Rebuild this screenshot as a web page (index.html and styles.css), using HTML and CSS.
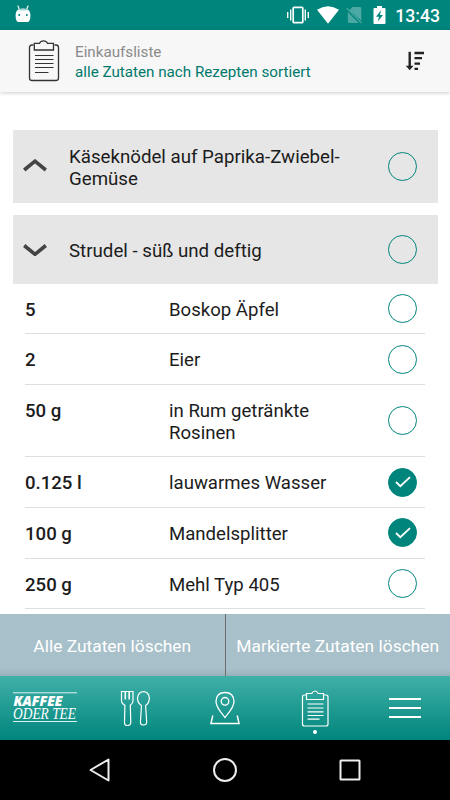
FILE: index.html
```html
<!DOCTYPE html>
<html lang="de">

<head>
    <meta charset="UTF-8">
    <meta name="viewport" content="width=device-width, initial-scale=1.0">
    <title>Einkaufsliste</title>
    <link rel="stylesheet" href="styles.css">
</head>

<body>
    <div class="status-bar">
        <svg class="droid" width="16" height="18" viewBox="0 0 16 18">
            <path d="M3 1l1.3 3.4M13 1l-1.3 3.4" stroke="#fff" stroke-width="1.2" stroke-linecap="round" />
            <path d="M3.4 4.4Q8 2.5 12.6 4.4C15 5.6 15.4 8 15.4 11c0 3-.7 5-2.2 6H2.8C1.3 16 .6 14 .6 11c0-3 .4-5.4 2.8-6.6z" fill="#fff" />
            <path d="M3.5 4.8h9" stroke="#80c3bf" stroke-width="1" />
            <circle cx="4.2" cy="10" r="1" fill="#00857c" />
            <circle cx="11.8" cy="10" r="1" fill="#00857c" />
        </svg>
        <div class="status-icons">
            <svg width="24" height="20" viewBox="0 0 24 20">
                <rect x="7.2" y="2.3" width="9.6" height="15.4" rx="1" fill="none" stroke="#fff" stroke-width="1.7" />
                <path d="M4.7 4.5v11M1.7 7v6M19.3 4.5v11M22.3 7v6" stroke="#fff" stroke-width="1.4" />
            </svg>
            <svg class="wifi" width="22" height="18" viewBox="0 0 22 18">
                <path d="M0 3.8Q11-3.3 22 3.8L11 17.8z" fill="#fff" />
            </svg>
            <svg class="no-sim" width="17" height="18" viewBox="0 0 17 18">
                <path d="M3.5 4.2L6.5 1H14q1.3 0 1.3 1.3v12.5zM1.8 6l11 11H3.2q-1.4 0-1.4-1.4z" fill="#4da9a3" />
                <path d="M.7 2.2l15 15" stroke="#4da9a3" stroke-width="1.2" />
            </svg>
            <svg class="battery" width="13" height="18" viewBox="0 0 13 18">
                <path d="M4 0h5v2h2.5q1 0 1 1v14q0 1-1 1h-10q-1 0-1-1V3q0-1 1-1H4z" fill="#fff" />
                <path d="M8 4.2L3 10.8h3L4.9 15.5 10 9H6.9z" fill="#00857c" />
            </svg>
            <span class="clock">13:43</span>
        </div>
    </div>

    <div class="header">
        <svg class="clipboard" width="32" height="42" viewBox="0 0 32 42" fill="none" stroke="#333">
            <path d="M5.5 5H4Q1.5 5 1.5 7.5V38Q1.5 40.5 4 40.5H28Q30.5 40.5 30.5 38V7.5Q30.5 5 28 5H26.5" stroke-width="1.3" />
            <path d="M6.3 3.3h5.2Q12.5.8 15.5.8t4 2.5h6V10H6.3z" stroke-width="1.3" />
            <path d="M7 15.500h18.500M7 19.500h18.500M7 23.500h18.500M7 27.500h18.500M7 32.500h13.500" />
        </svg>
        <div class="header-text">
            <h1>Einkaufsliste</h1>
            <p>alle Zutaten nach Rezepten sortiert</p>
        </div>
        <svg class="sort" width="20" height="20" viewBox="0 0 20 20" fill="none" stroke="#222">
            <path d="M4.7.8v16" stroke-width="2.4" />
            <path d="M.8 14.8l3.9 4.4 3.9-4.400z" fill="#222" stroke="none" />
            <path d="M9.5 2h9.500M9.500 7.200h7.500M9.500 12.700h5.500M9.500 17.800h3.500" stroke-width="2.3" />
        </svg>
    </div>

    <div class="content">
        <div class="recipe recipe-tall">
            <svg class="chevron" width="24" height="14" viewBox="0 0 24 14"><path d="M1.2 11L12 2.200 22.800 11" /></svg>
            <h2>Käseknödel auf Paprika-Zwiebel-Gemüse</h2>
            <span class="check"></span>
        </div>
        <div class="recipe">
            <svg class="chevron" width="24" height="14" viewBox="0 0 24 14"><path d="M1.2 3.5L12 12.300 22.800 3.500" /></svg>
            <h2>Strudel - süß und deftig</h2>
            <span class="check"></span>
        </div>
        <ul class="ingredients">
            <li><b>5</b><span class="name">Boskop Äpfel</span><span class="check"></span></li>
            <li><b>2</b><span class="name">Eier</span><span class="check"></span></li>
            <li><b>50 g</b><span class="name">in Rum getränkte Rosinen</span><span class="check"></span></li>
            <li>
                <b>0.125 l</b><span class="name">lauwarmes Wasser</span>
                <span class="check checked"><svg width="16" height="12" viewBox="0 0 16 12"><path d="M1 6l4.3 4.2L15 1.2" /></svg></span>
            </li>
            <li>
                <b>100 g</b><span class="name">Mandelsplitter</span>
                <span class="check checked"><svg width="16" height="12" viewBox="0 0 16 12"><path d="M1 6l4.3 4.2L15 1.2" /></svg></span>
            </li>
            <li><b>250 g</b><span class="name">Mehl Typ 405</span><span class="check"></span></li>
        </ul>
    </div>

    <div class="actions">
        <button>Alle Zutaten löschen</button>
        <button>Markierte Zutaten löschen</button>
    </div>

    <div class="tab-bar">
        <a class="tab">
            <svg class="logo" width="64" height="32" viewBox="0 0 64 32">
                <path d="M0 .8h64M0 29.5h64" stroke="#fff" stroke-opacity=".85" />
                <text class="logo-bold" x="0.5" y="14" textLength="49" lengthAdjust="spacingAndGlyphs">KAFFEE</text>
                <text class="logo-thin" x="0" y="27" textLength="63" lengthAdjust="spacingAndGlyphs">ODER TEE</text>
            </svg>
        </a>
        <a class="tab">
            <svg width="30" height="36" viewBox="0 0 30 36" fill="none" stroke="#fff" stroke-width="1.2">
                <path d="M1.5 1.5H13V11Q13 13.3 10.3 15.3L10.8 33Q10.5 35.5 7.5 35.5T4.5 33L4.9 15.3Q1.5 13.3 1.5 11z" />
                <path d="M5.3 1.5V9.5M9.2 1.5V9.5" stroke-width="1.6" />
                <path d="M21.5 15.5Q17.5 13 17.5 8Q18.5 1.6 23.5 1.6T29.4 8Q29.4 13 25.6 15.5L26.7 32.5Q26.5 35 23.5 35T20.4 32.5z" />
            </svg>
        </a>
        <a class="tab">
            <svg width="30" height="34" viewBox="0 0 30 34" fill="none" stroke="#fff" stroke-width="1.3">
                <path d="M15 26.5C11.5 22 6 16.5 6 10.5Q6.3 1.5 15 1.5T24 10.5C24 16.5 18.5 22 15 26.5z" />
                <circle cx="15" cy="10.3" r="3.8" />
                <path d="M2.8 24.5L.9 32.6H29.1L27.2 24.5" stroke-width="1.5" />
            </svg>
        </a>
        <a class="tab active">
            <svg width="28" height="37" viewBox="0 0 28 37" fill="none" stroke="#fff" stroke-width="1.2">
                <path d="M5.5 5H3.5Q1.5 5 1.5 7V34Q1.5 36 3.5 36H25Q27 36 27 34V7Q27 5 25 5H22.5" />
                <path d="M5.5 3.5h5.3Q12 1 14 1t3.2 2.5h5.3V9.5H5.5z" />
                <path d="M6.5 14h16M6.5 18h16M6.5 21.8h16M6.5 25.5h16M6.5 29.2h12" />
            </svg>
        </a>
        <a class="tab">
            <svg width="32" height="22" viewBox="0 0 32 22" stroke="#fff" stroke-width="2"><path d="M0 2h32M0 11h32M0 20h32" /></svg>
        </a>
    </div>

    <div class="system-nav">
        <svg width="24" height="26" viewBox="0 0 24 26"><path d="M20.5 2.5v21L2.5 13z" /></svg>
        <svg width="26" height="26" viewBox="0 0 26 26"><circle cx="13" cy="13" r="11" /></svg>
        <svg width="24" height="24" viewBox="0 0 24 24"><rect x="2.5" y="2.5" width="19" height="19" rx=".5" /></svg>
    </div>
</body>

</html>
```

FILE: styles.css
```css
* {
    padding: 0;
    margin: 0;
    box-sizing: border-box;
}

body {
    display: flex;
    flex-direction: column;
    height: 800px;
    overflow: hidden;
    font-family: Roboto, sans-serif;
    color: #1c1c1c;
    background: #fff;
}

svg {
    display: block;
    flex: none;
}

.status-bar {
    display: flex;
    justify-content: space-between;
    flex: none;
    height: 30px;
    padding: 5px 10px 0 15px;
    background: #00857c;
}

.status-icons {
    display: flex;
    align-items: flex-start;
}

.wifi {
    margin: 1px 0 0 7px;
}

.no-sim {
    margin: 1px 0 0 7px;
}

.battery {
    margin: 1px 0 0 10px;
}

.clock {
    margin-left: 9px;
    font-size: 17.6px;
    line-height: 22px;
    font-weight: 500;
    color: #fff;
}

.header {
    display: flex;
    flex: none;
    height: 62px;
    padding: 0 25px 0 28px;
    background: #f7f7f7;
    box-shadow: 0 1px 4px rgba(0, 0, 0, 0.2);
}

.clipboard {
    margin-top: 10px;
}

.header-text {
    flex: 1;
    padding: 12px 0 0 15px;
}

.header-text h1,
.header-text p {
    font-size: 15.2px;
    line-height: 20px;
    font-weight: 400;
    color: #8a8a8a;
}

.header-text p {
    line-height: 21px;
    color: #00796b;
}

.sort {
    margin-top: 21px;
}

.content {
    flex: 1;
    min-height: 0;
    overflow: hidden;
    padding: 38px 12.5px 0;
}

.recipe {
    display: flex;
    align-items: center;
    height: 68.5px;
    padding: 0 20.5px 0 10px;
    background: #e6e6e6;
}

.recipe-tall {
    height: 72.5px;
    margin-bottom: 12.5px;
}

.chevron {
    fill: none;
    stroke: #444;
    stroke-width: 3.6;
}

.recipe h2 {
    width: 290px;
    margin: 3px auto 0 22.5px;
    font-size: 18.7px;
    line-height: 22px;
    font-weight: 400;
}

.check {
    display: flex;
    align-items: center;
    justify-content: center;
    flex: none;
    width: 29px;
    height: 29px;
    border: 1px solid #00857c;
    border-radius: 50%;
}

.checked {
    background: #00857c;
}

.checked path {
    fill: none;
    stroke: #fff;
    stroke-width: 1.8;
}

.ingredients {
    margin: 0 12.5px;
    list-style: none;
}

.ingredients li {
    display: flex;
    align-items: center;
    min-height: 50.3px;
    padding: 16px 8px 12px 0;
    border-bottom: 1px solid #dedede;
    font-size: 18.6px;
    line-height: 21.7px;
}

.ingredients b {
    align-self: flex-start;
    width: 144px;
    font-weight: 500;
}

.ingredients .name {
    width: 175px;
    margin-right: auto;
}

.ingredients .check {
    margin: -8px 0 -4px;
}

.actions {
    display: flex;
    flex: none;
    height: 62px;
    background: linear-gradient(#a8c0ca 88%, #98b0ba);
}

.actions button {
    flex: 1;
    padding-top: 1px;
    border: none;
    background: none;
    font-family: inherit;
    font-size: 17.4px;
    white-space: nowrap;
    color: #fff;
}

.actions button:first-child {
    border-right: 1px solid #6f6f69;
}

.tab-bar {
    display: flex;
    flex: none;
    height: 64px;
    background: linear-gradient(#40b0a8, #00857c);
}

.tab {
    display: flex;
    align-items: center;
    justify-content: center;
    flex: 1;
    position: relative;
}

.logo {
    overflow: visible;
}

.logo text {
    fill: #fff;
    font-style: italic;
}

.logo .logo-bold {
    font-family: "Open Sans", sans-serif;
    font-size: 14.5px;
    font-weight: 800;
    stroke: #fff;
    stroke-width: 0.1px;
}

.logo .logo-thin {
    font-family: "Liberation Serif", serif;
    font-size: 16px;
}

/* dot under the current tab */
.active::after {
    content: "";
    position: absolute;
    bottom: 6px;
    width: 4px;
    height: 4px;
    border-radius: 50%;
    background: #fff;
}

.system-nav {
    display: flex;
    align-items: center;
    justify-content: space-between;
    flex: none;
    height: 60px;
    padding: 0 88px;
    background: #000;
}

.system-nav svg {
    fill: none;
    stroke: #eee;
    stroke-width: 2;
    stroke-linejoin: round;
}
```
